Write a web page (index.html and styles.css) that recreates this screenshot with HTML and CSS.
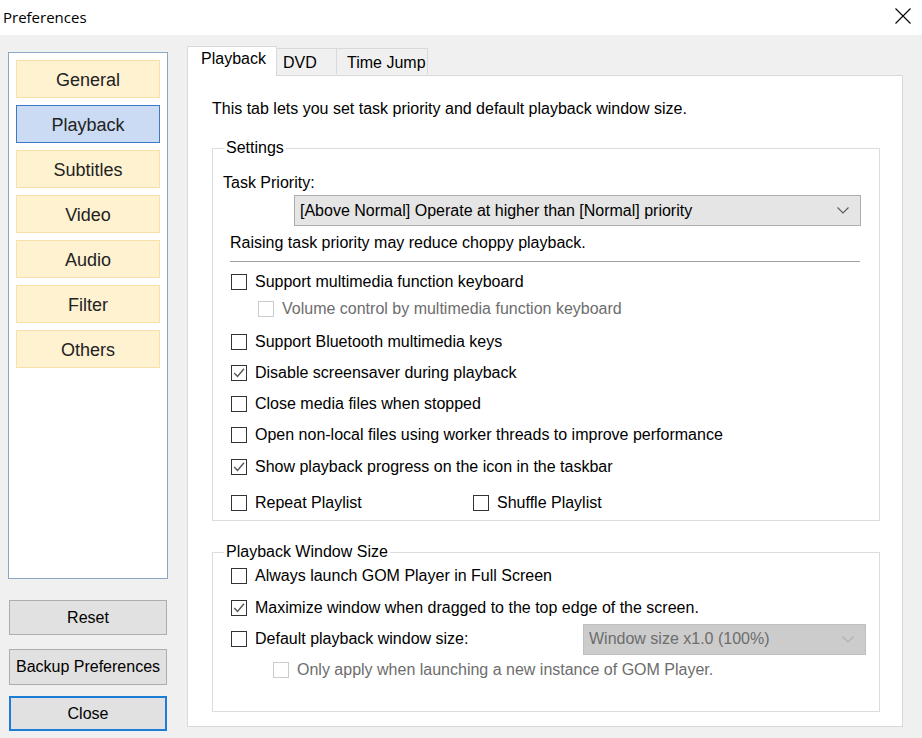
FILE: index.html
```html
<!DOCTYPE html>
<html>
<head>
<meta charset="utf-8">
<title>Preferences</title>
<link rel="stylesheet" href="styles.css">
</head>
<body>
<div class="window">
  <div class="titlebar">
    <span class="title">Preferences</span>
    <svg class="close-x" width="16" height="16" viewBox="0 0 16 16"><path d="M0.5 0.5 L15.5 15.5 M15.5 0.5 L0.5 15.5" stroke="#000" stroke-width="1.1" fill="none"/></svg>
  </div>
  <div class="main">
    <div class="left">
      <div class="navpanel">
        <div class="navbtn">General</div>
        <div class="navbtn active">Playback</div>
        <div class="navbtn">Subtitles</div>
        <div class="navbtn">Video</div>
        <div class="navbtn">Audio</div>
        <div class="navbtn">Filter</div>
        <div class="navbtn">Others</div>
      </div>
      <div class="btn btn-reset">Reset</div>
      <div class="btn btn-backup">Backup Preferences</div>
      <div class="btn btn-close">Close</div>
    </div>
    <div class="right">
      <div class="tabs">
        <div class="tab selected">Playback</div>
        <div class="tab tab-dvd">DVD</div>
        <div class="tab tab-jump">Time Jump</div>
      </div>
      <div class="tabpage">
        <div class="intro">This tab lets you set task priority and default playback window size.</div>
        <div class="group settings">
          <div class="legend">Settings</div>
          <div class="label-task">Task Priority:</div>
          <div class="combo combo-priority">
            <span>[Above Normal] Operate at higher than [Normal] priority</span>
            <svg class="chev" width="12" height="7" viewBox="0 0 12 7"><polyline points="0.5,0.5 6,6 11.5,0.5" fill="none" stroke="#5a5a5a" stroke-width="1.1"/></svg>
          </div>
          <div class="note">Raising task priority may reduce choppy playback.</div>
          <div class="sep"></div>
          <label class="row r1"><span class="cb"></span>Support multimedia function keyboard</label>
          <label class="row r2 sub disabled"><span class="cb"></span>Volume control by multimedia function keyboard</label>
          <label class="row r3"><span class="cb"></span>Support Bluetooth multimedia keys</label>
          <label class="row"><span class="cb checked"><svg width="14" height="14" viewBox="0 0 14 14"><polyline points="2.2,7 5.5,10.5 12,2.8" fill="none" stroke="#555" stroke-width="1.4"/></svg></span>Disable screensaver during playback</label>
          <label class="row"><span class="cb"></span>Close media files when stopped</label>
          <label class="row"><span class="cb"></span>Open non-local files using worker threads to improve performance</label>
          <label class="row r7"><span class="cb checked"><svg width="14" height="14" viewBox="0 0 14 14"><polyline points="2.2,7 5.5,10.5 12,2.8" fill="none" stroke="#555" stroke-width="1.4"/></svg></span>Show playback progress on the icon in the taskbar</label>
          <div class="row r8 pair">
            <label class="half"><span class="cb"></span>Repeat Playlist</label>
            <label class="half"><span class="cb"></span>Shuffle Playlist</label>
          </div>
        </div>
        <div class="group winsize">
          <div class="legend">Playback Window Size</div>
          <label class="row w1"><span class="cb"></span>Always launch GOM Player in Full Screen</label>
          <label class="row w2"><span class="cb checked"><svg width="14" height="14" viewBox="0 0 14 14"><polyline points="2.2,7 5.5,10.5 12,2.8" fill="none" stroke="#555" stroke-width="1.4"/></svg></span>Maximize window when dragged to the top edge of the screen.</label>
          <div class="row w3 sizerow">
            <label class="sizelabel"><span class="cb"></span>Default playback window size:</label>
            <div class="combo combo-size">
              <span>Window size x1.0 (100%)</span>
              <svg class="chev" width="12" height="7" viewBox="0 0 12 7"><polyline points="0.5,0.5 6,6 11.5,0.5" fill="none" stroke="#b0b0b0" stroke-width="1.1"/></svg>
            </div>
          </div>
          <label class="row w4 sub2 disabled"><span class="cb"></span>Only apply when launching a new instance of GOM Player.</label>
        </div>
      </div>
    </div>
  </div>
</div>
</body>
</html>
```

FILE: styles.css
```css
html, body {
  margin: 0;
  padding: 0;
}
body {
  width: 922px;
  height: 738px;
  overflow: hidden;
  background: #f0f0f0;
  font-family: "Liberation Sans", Arial, sans-serif;
  font-size: 16px;
  color: #000;
}
.window {
  width: 922px;
  height: 738px;
  display: flex;
  flex-direction: column;
}
.titlebar {
  height: 35px;
  background: #fff;
  display: flex;
  align-items: center;
  justify-content: space-between;
  padding: 0 11px 0 3px;
  box-sizing: border-box;
}
.title {
  font-family: "Open Sans", "Noto Sans", sans-serif;
  font-size: 15px;
  color: #000;
  margin-top: -2px;
}
.close-x {
  margin-top: -3px;
}
.main {
  flex: 1;
  display: flex;
  padding-left: 8px;
}
.left {
  width: 160px;
  display: flex;
  flex-direction: column;
  padding-top: 17px;
}
.navpanel {
  height: 527px;
  box-sizing: border-box;
  border: 1px solid #8fa5c4;
  background: #fff;
  padding: 7px 7px 0 7px;
  display: flex;
  flex-direction: column;
  gap: 7px;
}
.navbtn {
  height: 38px;
  box-sizing: border-box;
  background: #fff2d1;
  border: 1px solid #fbdfab;
  display: flex;
  align-items: center;
  justify-content: center;
  font-size: 18px;
  color: #222;
  padding-top: 2px;
}
.navbtn.active {
  background: #cbdbf4;
  border-color: #3d79c9;
}
.btn {
  margin-left: 1px;
  width: 158px;
  height: 35px;
  box-sizing: border-box;
  background: #e1e1e1;
  border: 1px solid #adadad;
  display: flex;
  align-items: center;
  justify-content: center;
  font-size: 16px;
  color: #000;
}
.btn-reset {
  margin-top: 21px;
}
.btn-backup {
  margin-top: 14px;
  height: 36px;
}
.btn-close {
  margin-top: 11px;
  border: 2px solid #1c7dd6;
}
.right {
  margin-left: 19px;
  width: 716px;
  padding-top: 11px;
  display: flex;
  flex-direction: column;
}
.tabs {
  display: flex;
  align-items: flex-end;
  height: 29px;
  position: relative;
  z-index: 1;
}
.tab {
  height: 26px;
  box-sizing: border-box;
  border: 1px solid #d9d9d9;
  border-bottom: none;
  border-left: none;
  background: #f0f0f0;
  display: flex;
  align-items: center;
  font-size: 16px;
  margin-bottom: 1px;
  padding-top: 2px;
}
.tab-dvd {
  width: 60px;
  padding-left: 6px;
}
.tab-jump {
  width: 91px;
  padding-left: 10px;
}
.tab.selected {
  width: 90px;
  height: 30px;
  background: #fff;
  border-left: 1px solid #d9d9d9;
  padding: 3px 0 0 13px;
  margin-bottom: -1px;
  align-items: flex-start;
}
.tabpage {
  height: 652px;
  width: 716px;
  box-sizing: border-box;
  background: #fff;
  border: 1px solid #d9d9d9;
  padding: 23px 23px 0 24px;
}
.intro {
  line-height: 20px;
}
.group {
  border: 1px solid #dcdcdc;
  width: 668px;
  box-sizing: border-box;
  display: flex;
  flex-direction: column;
}
.settings {
  margin-top: 29px;
  height: 373px;
}
.legend {
  margin-top: -11px;
  margin-left: 11px;
  line-height: 20px;
  background: #fff;
  padding: 0 2px;
  align-self: flex-start;
}
.label-task {
  margin-top: 15px;
  margin-left: 10px;
  line-height: 20px;
}
.combo {
  box-sizing: border-box;
  display: flex;
  align-items: center;
  justify-content: space-between;
  border: 1px solid #adadad;
  background: #e5e5e5;
  padding: 0 11px 0 5px;
}
.combo-priority {
  margin-top: 2px;
  margin-left: 81px;
  width: 567px;
  height: 31px;
}
.note {
  margin-top: 7px;
  margin-left: 17px;
  line-height: 20px;
}
.sep {
  margin-top: 8px;
  margin-left: 17px;
  width: 630px;
  height: 1px;
  background: #a0a0a0;
}
.row {
  display: flex;
  align-items: center;
  height: 20px;
  line-height: 20px;
  margin-top: 11px;
  margin-left: 18px;
  white-space: nowrap;
}
.cb {
  width: 16px;
  height: 16px;
  box-sizing: border-box;
  border: 1px solid #333;
  background: #fff;
  margin-right: 8px;
  display: flex;
  align-items: center;
  justify-content: center;
  flex: none;
}
.disabled {
  color: #6d6d6d;
}
.disabled .cb {
  border-color: #cccccc;
}
.r1 { margin-top: 10px; }
.r2 { margin-top: 7px; }
.r3 { margin-top: 13px; }
.r7 { margin-top: 12px; }
.r8 { margin-top: 16px; }
.sub { margin-left: 45px; }
.pair { margin-left: 18px; }
.half {
  display: flex;
  align-items: center;
  width: 242px;
}
.winsize {
  margin-top: 31px;
  height: 160px;
}
.w1 { margin-top: 4px; }
.w2 { margin-top: 12px; }
.sizerow {
  margin-top: 11px;
  justify-content: flex-start;
}
.sizelabel {
  display: flex;
  align-items: center;
  width: 352px;
}
.combo-size {
  width: 283px;
  height: 31px;
  flex: none;
  background: #cccccc;
  border-color: #bfbfbf;
  color: #6d6d6d;
  padding-left: 5px;
}
.w4 {
  margin-top: 11px;
  margin-left: 60px;
}
```
